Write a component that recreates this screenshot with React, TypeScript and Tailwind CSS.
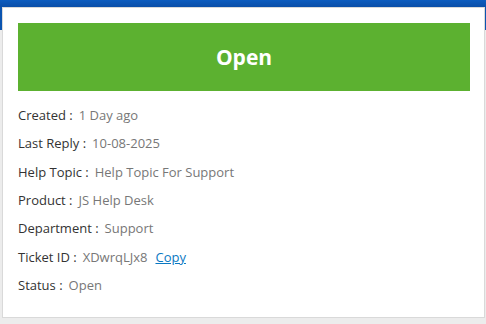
export default function App() {
  const rows: [string, string][] = [
    ["Created :", "1 Day ago"],
    ["Last Reply :", "10-08-2025"],
    ["Help Topic :", "Help Topic For Support"],
    ["Product :", "JS Help Desk"],
    ["Department :", "Support"],
  ];
  return (
    <div
      className="w-[486px] h-[324px] bg-[linear-gradient(to_bottom,#0b54b0_0px,#0b54b0_30px,#ececec_30px)] overflow-hidden"
      style={{ fontFamily: '"Open Sans", sans-serif' }}
    >
      <div className="h-[7px] bg-[linear-gradient(to_bottom,#0d5cbf,#0a4ea8)]" />
      <div className="ml-[2px] w-[483px] h-[311px] bg-white border border-[#d9d9d9] pl-[15px] pt-[15px]">
        <div className="w-[452px] h-[68px] pt-[2px] bg-[#5cb130] flex items-center justify-center text-white text-[21px] font-bold">
          Open
        </div>
        <div className="mt-[15px] flex flex-col gap-[9.35px] text-[13px] leading-[19px]">
          {rows.map(([l, v]) => (
            <div key={l} className="flex gap-[6px]">
              <span className="text-[#333]">{l}</span>
              <span className="text-[#777]">{v}</span>
            </div>
          ))}
          <div className="flex gap-[6px]">
            <span className="text-[#333]">Ticket ID :</span>
            <span className="text-[#777]">XDwrqLJx8</span>
            <span className="text-[#0a78c2] underline ml-[2px]">Copy</span>
          </div>
          <div className="flex gap-[6px]">
            <span className="text-[#333]">Status :</span>
            <span className="text-[#777]">Open</span>
          </div>
        </div>
      </div>
    </div>
  );
}
